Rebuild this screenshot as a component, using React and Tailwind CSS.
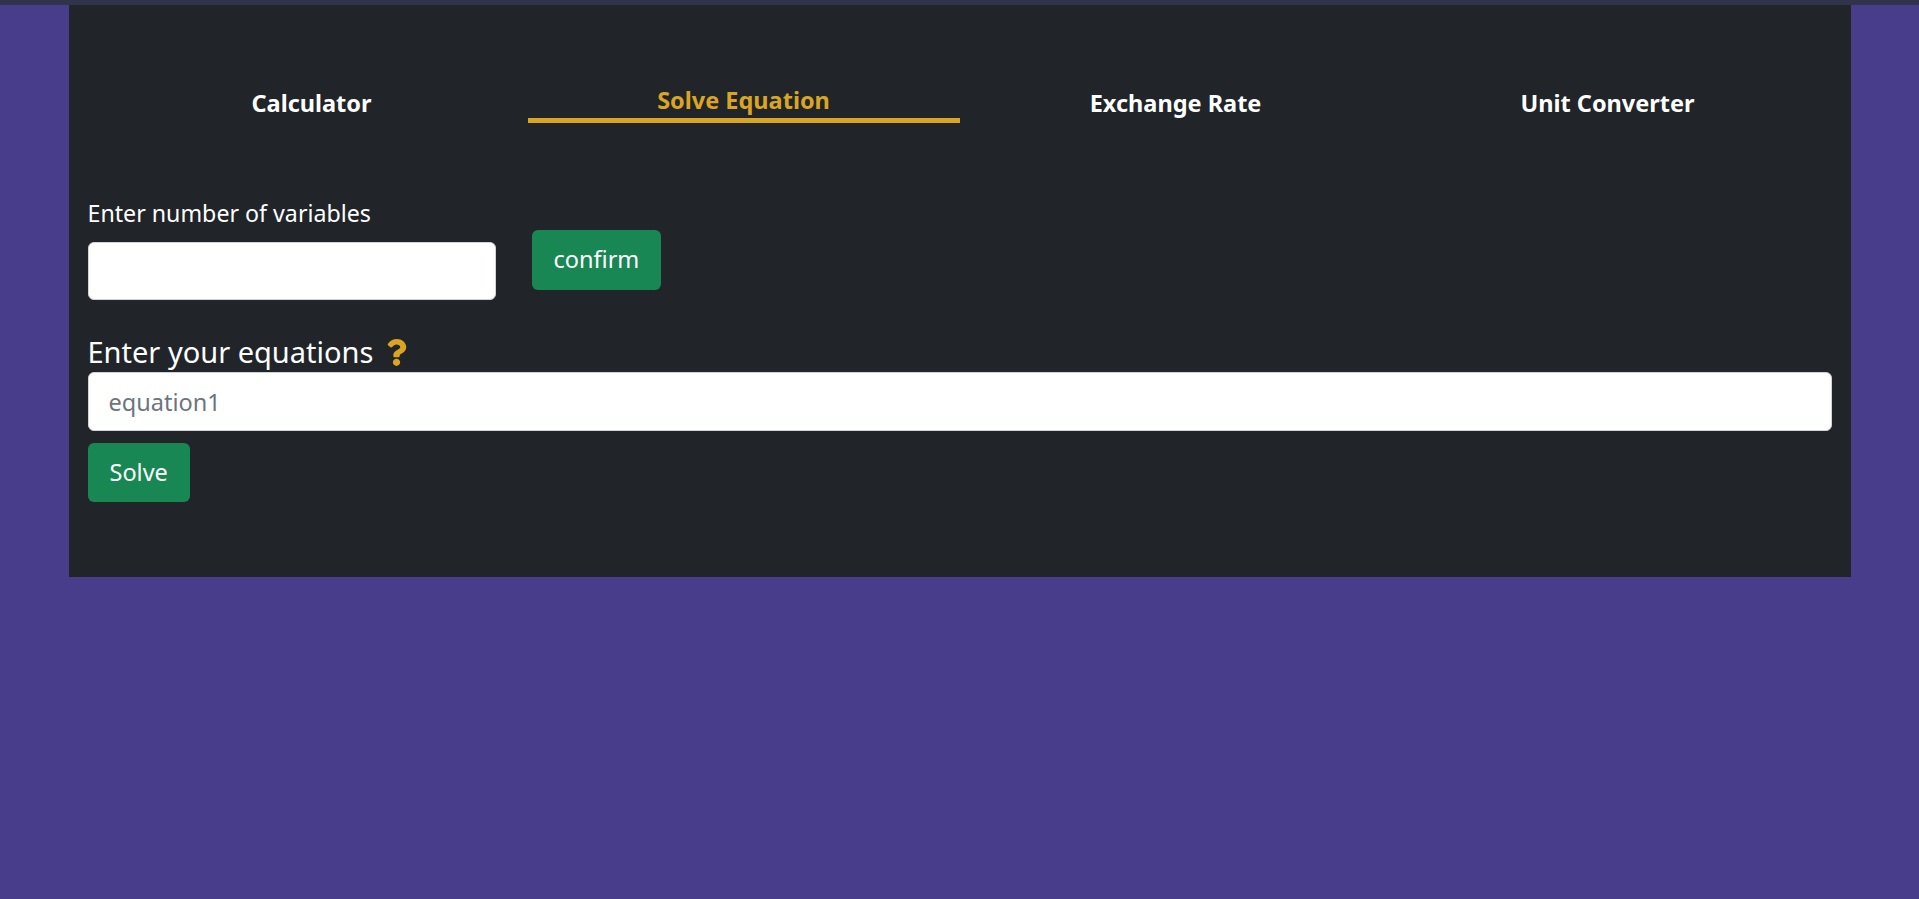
import { FaQuestion } from "react-icons/fa";

const tabs = ["Calculator", "Solve Equation", "Exchange Rate", "Unit Converter"];

export default function App() {
  const active = "Solve Equation";
  return (
    <div className="min-h-[899px] bg-[#483d8b] font-['Noto_Sans',sans-serif]">
      <div className="h-[5px] bg-[#30334a]" />
      <div className="w-[1782px] mx-auto bg-[#212529] px-[19px] pt-[77px] pb-[75px]">
        {/* tabs */}
        <div className="grid grid-cols-4 items-center px-2 h-[41px]">
          {tabs.map(t => (
            <div key={t} className="flex justify-center">
              <span
                className={
                  t === active
                    ? "w-full text-center text-[23.5px] leading-[36px] font-bold text-[#daa520] border-b-[5px] border-[#daa520]"
                    : "w-full text-center text-[23.5px] leading-[36px] font-bold text-white"
                }
              >
                {t}
              </span>
            </div>
          ))}
        </div>

        {/* number of variables */}
        <div className="flex items-start gap-[36px] mt-[72px]">
          <div className="flex flex-col">
            <label className="text-[23.2px] leading-[36px] text-white mb-[11px]">Enter number of variables</label>
            <input
              type="text"
              className="w-[408px] h-[58px] bg-white rounded-[6px] border border-[#ced4da] px-[18px] text-[23px] outline-none"
            />
          </div>
          <button className="mt-[35px] h-[60px] px-[22px] rounded-[6px] bg-[#198754] text-white text-[23.5px]">
            confirm
          </button>
        </div>

        {/* equations */}
        <div className="mt-[34px] flex items-center gap-[10px] h-[36px]">
          <span className="text-[29px] leading-[36px] text-white">Enter your equations</span>
          <FaQuestion className="text-[#daa520]" size={27} />
        </div>
        <input
          type="text"
          placeholder="equation1"
          className="mt-[2px] w-full h-[59px] bg-white rounded-[6px] border border-[#ced4da] px-[20px] text-[23.5px] outline-none placeholder:text-[#6c757d]"
        />
        <button className="mt-[12px] h-[59px] px-[22px] rounded-[6px] bg-[#198754] text-white text-[23.5px]">
          Solve
        </button>
      </div>
    </div>
  );
}
